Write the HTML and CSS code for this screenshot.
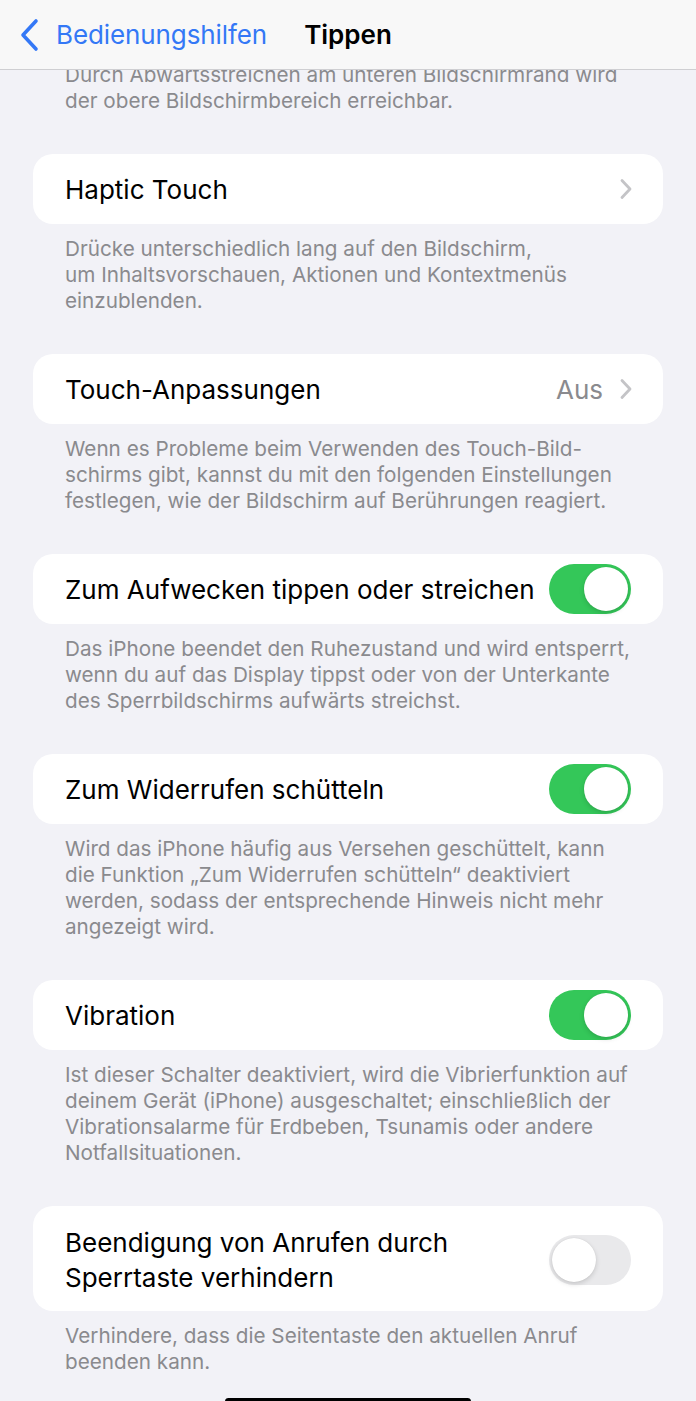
FILE: index.html
```html
<!DOCTYPE html>
<html lang="de">
<head>
<meta charset="utf-8">
<title>Tippen</title>
<link rel="stylesheet" href="styles.css">
</head>
<body>
<div class="screen">
  <header class="nav">
    <div class="nav-back">
      <svg class="back-chevron" width="22" height="34" viewBox="0 0 22 34"><path d="M17 3 L4 17 L17 31" fill="none" stroke="#3478f6" stroke-width="3.6" stroke-linecap="round" stroke-linejoin="round"/></svg>
      <span class="back-label">Bedienungshilfen</span>
    </div>
    <div class="nav-title">Tippen</div>
    <div></div>
  </header>
  <main class="content">
    <p class="footer footer-first">Durch Abwärtsstreichen am unteren Bildschirmrand wird<br>der obere Bildschirmbereich erreichbar.</p>

    <div class="card">
      <span class="label">Haptic Touch</span>
      <span class="accessory">
        <svg class="chevron" width="14" height="22" viewBox="0 0 14 22"><path d="M3 2.5 L11 11 L3 19.5" fill="none" stroke="#c4c4c7" stroke-width="2.8" stroke-linecap="round" stroke-linejoin="round"/></svg>
      </span>
    </div>
    <p class="footer">Drücke unterschiedlich lang auf den Bildschirm,<br>um Inhaltsvorschauen, Aktionen und Kontextmenüs<br>einzublenden.</p>

    <div class="card">
      <span class="label">Touch-Anpassungen</span>
      <span class="accessory">
        <span class="value">Aus</span>
        <svg class="chevron" width="14" height="22" viewBox="0 0 14 22"><path d="M3 2.5 L11 11 L3 19.5" fill="none" stroke="#c4c4c7" stroke-width="2.8" stroke-linecap="round" stroke-linejoin="round"/></svg>
      </span>
    </div>
    <p class="footer">Wenn es Probleme beim Verwenden des Touch-Bild-<br>schirms gibt, kannst du mit den folgenden Einstellungen<br>festlegen, wie der Bildschirm auf Berührungen reagiert.</p>

    <div class="card">
      <span class="label">Zum Aufwecken tippen oder streichen</span>
      <span class="toggle on"><span class="knob"></span></span>
    </div>
    <p class="footer">Das iPhone beendet den Ruhezustand und wird entsperrt,<br>wenn du auf das Display tippst oder von der Unterkante<br>des Sperrbildschirms aufwärts streichst.</p>

    <div class="card">
      <span class="label">Zum Widerrufen schütteln</span>
      <span class="toggle on"><span class="knob"></span></span>
    </div>
    <p class="footer">Wird das iPhone häufig aus Versehen geschüttelt, kann<br>die Funktion „Zum Widerrufen schütteln“ deaktiviert<br>werden, sodass der entsprechende Hinweis nicht mehr<br>angezeigt wird.</p>

    <div class="card">
      <span class="label">Vibration</span>
      <span class="toggle on"><span class="knob"></span></span>
    </div>
    <p class="footer">Ist dieser Schalter deaktiviert, wird die Vibrierfunktion auf<br>deinem Gerät (iPhone) ausgeschaltet; einschließlich der<br>Vibrationsalarme für Erdbeben, Tsunamis oder andere<br>Notfallsituationen.</p>

    <div class="card card-tall">
      <span class="label label-multi">Beendigung von Anrufen durch<br>Sperrtaste verhindern</span>
      <span class="toggle off"><span class="knob"></span></span>
    </div>
    <p class="footer">Verhindere, dass die Seitentaste den aktuellen Anruf<br>beenden kann.</p>
  </main>
  <div class="home-indicator"></div>
</div>
</body>
</html>
```

FILE: styles.css
```css
* { box-sizing: border-box; }
html, body {
  margin: 0;
  padding: 0;
  background: #f2f2f7;
}
body {
  font-family: Inter, "Noto Sans", "Liberation Sans", sans-serif;
  -webkit-font-smoothing: antialiased;
}
.screen {
  width: 696px;
  height: 1401px;
  overflow: hidden;
  display: flex;
  flex-direction: column;
  position: relative;
}
.nav {
  height: 70px;
  flex: none;
  background: #f8f8f8;
  border-bottom: 1px solid #cfcfd2;
  display: grid;
  grid-template-columns: 1fr auto 1fr;
  align-items: center;
  position: relative;
  z-index: 2;
}
.nav-back {
  display: flex;
  align-items: center;
  padding-left: 19px;
  gap: 15px;
}
.back-chevron { display: block; }
.back-label {
  color: #3478f6;
  font-size: 26px;
  letter-spacing: -0.1px;
}
.nav-title {
  font-size: 26px;
  font-weight: 600;
  color: #000;
}
.content {
  flex: 1;
  overflow: hidden;
}
.footer {
  margin: 0 0 40px;
  padding: 12px 20px 0 65px;
  font-size: 20.7px;
  line-height: 26px;
  color: #8a8a8e;
  white-space: nowrap;
}
.footer-first {
  margin-top: -8px;
  padding-top: 0;
}
.card {
  margin: 0 33px;
  height: 70px;
  background: #fff;
  border-radius: 20px;
  display: flex;
  align-items: center;
  justify-content: space-between;
  padding: 0 32px;
}
.card-tall {
  height: 105px;
  padding-top: 3px;
}
.label {
  font-size: 26px;
  color: #000;
  white-space: nowrap;
}
.label-multi {
  line-height: 35px;
}
.accessory {
  display: flex;
  align-items: center;
  gap: 16px;
  margin-right: -2px;
}
.chevron { display: block; }
.value {
  font-size: 26px;
  color: #8a8a8e;
}
.toggle {
  width: 82px;
  height: 50px;
  border-radius: 25px;
  position: relative;
  flex: none;
}
.toggle.on { background: #34c759; }
.toggle.off { background: #e9e9eb; }
.knob {
  position: absolute;
  top: 3px;
  width: 44px;
  height: 44px;
  border-radius: 50%;
  background: #fff;
  box-shadow: 0 2px 5px rgba(0,0,0,0.15), 0 0 1px rgba(0,0,0,0.12);
}
.toggle.on .knob { right: 3px; }
.toggle.off .knob { left: 3px; }
.home-indicator {
  position: absolute;
  left: 225px;
  bottom: -4px;
  width: 246px;
  height: 7px;
  border-radius: 4px;
  background: #000;
}
```
